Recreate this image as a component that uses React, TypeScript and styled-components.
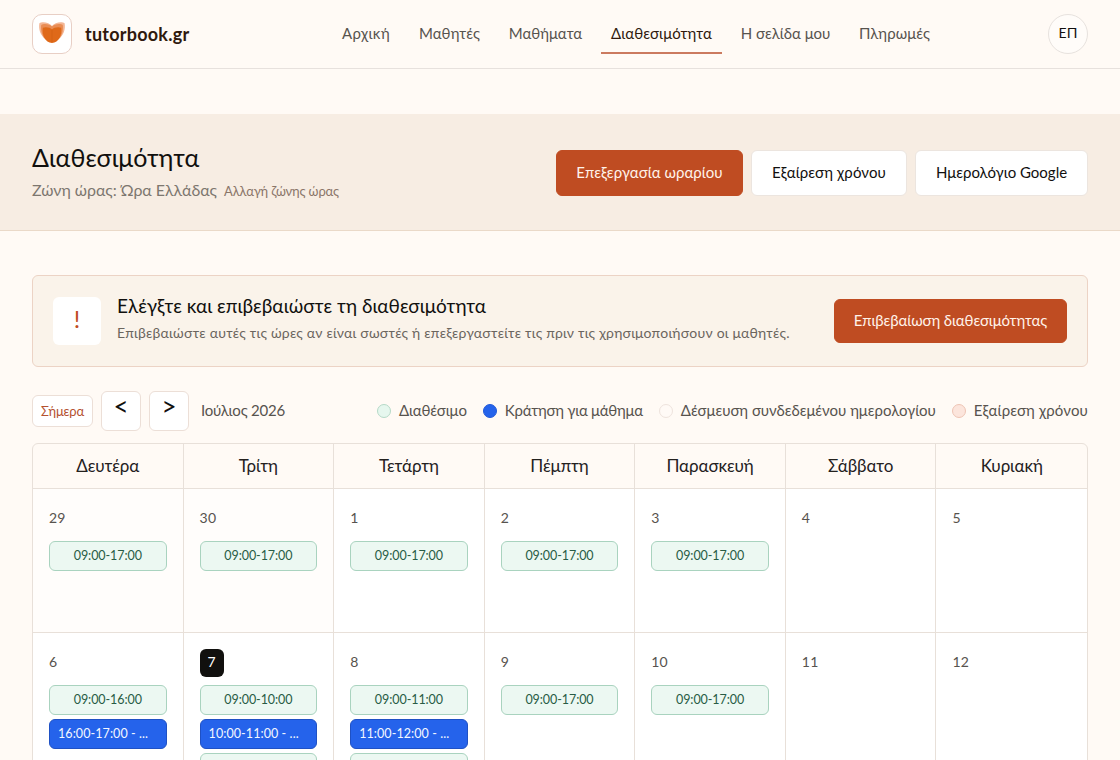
import React from "react";
import styled, { createGlobalStyle } from "styled-components";

const Global = createGlobalStyle`
  *, *::before { box-sizing: border-box; }
  body {
    margin: 0;
    height: 760px;
    overflow: hidden;
    background: #fffaf5;
    color: #11100e;
    font-family: Lato, "Open Sans", sans-serif;
  }
  button { font-family: inherit; cursor: pointer; }
`;

const Header = styled.header`
  display: flex;
  align-items: center;
  justify-content: space-between;
  height: 69px;
  padding: 0 32px;
  border-bottom: 1px solid #e7e1dd;
`;

const Brand = styled.a`
  display: flex;
  align-items: center;
  gap: 13px;
  width: 300px;
  color: #2f190d;
  font-size: 18px;
  font-weight: 700;
  letter-spacing: 0.24px;
`;

const LogoBox = styled.span`
  display: flex;
  width: 40px;
  height: 40px;
  border: 1px solid #e8cfc5;
  border-radius: 10px;
  background: #fff;
`;

const Nav = styled.nav`
  display: flex;
  flex: 1;
  gap: 9px;
`;

const NavItem = styled.a<{ $width: number; $active?: boolean; $spacing?: number }>`
  flex: none;
  width: ${(p) => p.$width}px;
  height: 40px;
  padding-top: 2px;
  border-bottom: 2px solid ${(p) => (p.$active ? "#cb7a5f" : "transparent")};
  color: ${(p) => (p.$active ? "#2f190d" : "#57534e")};
  font-size: 15px;
  line-height: 34px;
  letter-spacing: ${(p) => p.$spacing ?? 0}px;
  text-align: center;
  white-space: nowrap;
`;

const Avatar = styled.button`
  width: 40px;
  height: 40px;
  padding: 0 0 3px;
  border: 1px solid #e7e2de;
  border-radius: 50%;
  background: #fffcf9;
  color: #11100e;
  font-size: 14px;
`;

const Hero = styled.section`
  display: flex;
  align-items: center;
  justify-content: space-between;
  height: 117px;
  margin-top: 45px;
  padding: 0 32px;
  border-bottom: 1px solid #ead9c8;
  background: #f7ede3;
`;

const Title = styled.h1`
  margin: 0;
  font-size: 25px;
  font-weight: 400;
  line-height: 32px;
  letter-spacing: 0.1px;
`;

const Zone = styled.p`
  display: flex;
  align-items: baseline;
  gap: 7px;
  margin: 5px 0 0;
  color: #7d776f;
  font-size: 16px;
  line-height: 24px;
  letter-spacing: -0.05px;
`;

const ZoneLink = styled.a`
  color: #8a7569;
  font-size: 13px;
  letter-spacing: -0.15px;
`;

const Actions = styled.div`
  display: flex;
  gap: 8px;
  padding-top: 2px;
`;

const Button = styled.button<{ $width: number; $primary?: boolean; $height?: number; $spacing?: number }>`
  flex: none;
  width: ${(p) => p.$width}px;
  height: ${(p) => p.$height ?? 46}px;
  padding: 0 0 2px;
  border: 1px solid ${(p) => (p.$primary ? "#bf4c22" : "#ece5df")};
  border-radius: 6px;
  background: ${(p) => (p.$primary ? "#bf4c22" : "#fff")};
  color: ${(p) => (p.$primary ? "#fff3ea" : "#11100e")};
  font-size: 15px;
  letter-spacing: ${(p) => p.$spacing ?? 0}px;
  white-space: nowrap;
`;

const Main = styled.main`
  padding: 44px 32px 0;
`;

const Alert = styled.section`
  display: flex;
  align-items: center;
  height: 92px;
  padding: 0 20px;
  border: 1px solid #ecd3c5;
  border-radius: 6px;
  background: #faf3ea;
`;

const AlertIcon = styled.span`
  flex: none;
  width: 48px;
  height: 48px;
  margin-right: 16px;
  border-radius: 6px;
  background: #fff;
  color: #bf4c22;
  font-size: 24px;
  line-height: 44px;
  text-align: center;
`;

const AlertText = styled.div`
  flex: 1;
  padding-bottom: 6px;
  white-space: nowrap;
`;

const AlertTitle = styled.h2`
  margin: 0;
  font-size: 19px;
  font-weight: 400;
  line-height: 28px;
  letter-spacing: 0.02px;
`;

const AlertBody = styled.p`
  margin: 1px 0 0;
  color: #6b655e;
  font-size: 14px;
  line-height: 24px;
  letter-spacing: 0.22px;
`;

const Toolbar = styled.div`
  display: flex;
  align-items: center;
  gap: 8px;
  height: 40px;
  margin-top: 24px;
`;

const TodayButton = styled.button`
  width: 61px;
  height: 32px;
  padding: 0;
  border: 1px solid #ecdfd7;
  border-radius: 6px;
  background: #fff;
  color: #b4512f;
  font-size: 13px;
  letter-spacing: -0.15px;
`;

const StepButton = styled.button`
  width: 40px;
  height: 40px;
  padding: 0 0 10px;
  border: 1px solid #ecdfd7;
  border-radius: 6px;
  background: #fff;
  color: #11100e;
  font-size: 26px;
  line-height: 24px;
`;

const Month = styled.span`
  margin-left: 4px;
  padding-bottom: 2px;
  color: #57534e;
  font-size: 15px;
  letter-spacing: -0.2px;
`;

const Legend = styled.ul`
  display: flex;
  gap: 16px;
  margin: 0 0 0 auto;
  padding: 0;
  list-style: none;
`;

const LegendItem = styled.li<{ $fill: string; $line: string; $spacing: number }>`
  display: flex;
  align-items: center;
  gap: 8px;
  color: #57534e;
  font-size: 15px;
  line-height: 18px;
  letter-spacing: ${(p) => p.$spacing}px;
  white-space: nowrap;

  &::before {
    content: "";
    width: 14px;
    height: 14px;
    border: 1px solid ${(p) => p.$line};
    border-radius: 50%;
    background: ${(p) => p.$fill};
  }
`;

const LegendText = styled.span`
  padding-bottom: 2px;
`;

const Calendar = styled.section`
  margin-top: 12px;
  border: 1px solid #e8e0d9;
  border-radius: 6px 6px 0 0;
  overflow: hidden;
`;

const Week = styled.div`
  display: grid;
  grid-template-columns: repeat(7, 1fr);
`;

const DayName = styled.div`
  height: 45px;
  border-right: 1px solid #e8e0d9;
  border-bottom: 1px solid #e8e0d9;
  color: #24211e;
  font-size: 17px;
  line-height: 43px;
  letter-spacing: -0.1px;
  text-align: center;
  &:last-child { border-right: 0; }
`;

const Day = styled.div<{ $muted?: boolean }>`
  display: flex;
  flex-direction: column;
  gap: 4px;
  min-width: 0;
  height: 144px;
  padding: 16px 16px 0;
  border-right: 1px solid #e8e0d9;
  border-bottom: 1px solid #e8e0d9;
  background: ${(p) => (p.$muted ? "#fffdfb" : "#fff")};
  &:last-child { border-right: 0; }
`;

const DayNumber = styled.span<{ $today?: boolean }>`
  flex: none;
  align-self: flex-start;
  min-width: ${(p) => (p.$today ? 24 : 0)}px;
  height: 28px;
  margin-bottom: 4px;
  border-radius: 6px;
  background: ${(p) => (p.$today ? "#11100e" : "transparent")};
  color: ${(p) => (p.$today ? "#fff" : "#57534e")};
  font-size: 14px;
  line-height: 26px;
  letter-spacing: 0.2px;
  text-align: center;
`;

const Slot = styled.div<{ $booked?: boolean }>`
  flex: none;
  height: 30px;
  padding: 0 8px;
  border: 1px solid ${(p) => (p.$booked ? "#1f51c4" : "#a9d3bf")};
  border-radius: 6px;
  background: ${(p) => (p.$booked ? "#2563eb" : "#ecf8f2")};
  color: ${(p) => (p.$booked ? "#f3f7ff" : "#285c45")};
  font-size: 12.5px;
  line-height: 27px;
  letter-spacing: ${(p) => (p.$booked ? 0.08 : -0.07)}px;
  text-align: ${(p) => (p.$booked ? "left" : "center")};
  white-space: nowrap;
`;

const Logo = () => (
  <svg width="38" height="38" viewBox="0 0 38 38" aria-hidden="true">
    <path d="M19 11C16.5 7.3 9 6 6.4 8.2C5.4 13.5 7 20.5 13 24.5L19 26L25 24.5C31 20.5 32.6 13.5 31.6 8.2C29 6 21.5 7.3 19 11Z" fill="#f3b796" />
    <path d="M19 11.6C17 8.8 10.5 8.2 8.2 10C7.4 15.5 9 22 14 25.5L19 27L24 25.5C29 22 30.6 15.5 29.8 10C27.5 8.2 21 8.8 19 11.6Z" fill="#e98d55" />
    <path d="M19 14.4C17.2 12.4 12.5 11.6 9.8 12.8C8.8 19.5 12 27.9 19 27.9C26 27.9 29.2 19.5 28.2 12.8C25.5 11.6 20.8 12.4 19 14.4Z" fill="#df6919" />
    <path d="M19 14.5V27" stroke="#c95a12" strokeWidth="0.5" />
  </svg>
);

const legend = [
  { label: "Διαθέσιμο", fill: "#e6f7ee", line: "#b5d9c7", spacing: -0.1 },
  { label: "Κράτηση για μάθημα", fill: "#2563eb", line: "#2159d8", spacing: -0.25 },
  { label: "Δέσμευση συνδεδεμένου ημερολογίου", fill: "#fffaf6", line: "#eee3dd", spacing: -0.03 },
  { label: "Εξαίρεση χρόνου", fill: "#fce5dc", line: "#eec4b4", spacing: 0.13 },
];

const dayNames = ["Δευτέρα", "Τρίτη", "Τετάρτη", "Πέμπτη", "Παρασκευή", "Σάββατο", "Κυριακή"];

type Entry = { time: string; booked?: boolean };
type DayData = { n: number; muted?: boolean; today?: boolean; slots: Entry[] };

const full: Entry[] = [{ time: "09:00-17:00" }];

const weeks: DayData[][] = [
  [
    { n: 29, muted: true, slots: full },
    { n: 30, muted: true, slots: full },
    { n: 1, slots: full },
    { n: 2, slots: full },
    { n: 3, slots: full },
    { n: 4, slots: [] },
    { n: 5, slots: [] },
  ],
  [
    { n: 6, slots: [{ time: "09:00-16:00" }, { time: "16:00-17:00 - ...", booked: true }] },
    { n: 7, today: true, slots: [{ time: "09:00-10:00" }, { time: "10:00-11:00 - ...", booked: true }, { time: "" }] },
    { n: 8, slots: [{ time: "09:00-11:00" }, { time: "11:00-12:00 - ...", booked: true }, { time: "" }] },
    { n: 9, slots: full },
    { n: 10, slots: full },
    { n: 11, slots: [] },
    { n: 12, slots: [] },
  ],
];

export default function App() {
  return (
    <>
      <Global />
      <Header>
        <Brand>
          <LogoBox><Logo /></LogoBox>
          tutorbook.gr
        </Brand>
        <Nav>
          <NavItem $width={68} $spacing={0.4}>Αρχική</NavItem>
          <NavItem $width={81} $spacing={0.1}>Μαθητές</NavItem>
          <NavItem $width={93}>Μαθήματα</NavItem>
          <NavItem $width={121} $spacing={0.1} $active>Διαθεσιμότητα</NavItem>
          <NavItem $width={109}>Η σελίδα μου</NavItem>
          <NavItem $width={91} $spacing={0.1}>Πληρωμές</NavItem>
        </Nav>
        <Avatar>ΕΠ</Avatar>
      </Header>

      <Hero>
        <div>
          <Title>Διαθεσιμότητα</Title>
          <Zone>
            Ζώνη ώρας: Ώρα Ελλάδας
            <ZoneLink>Αλλαγή ζώνης ώρας</ZoneLink>
          </Zone>
        </div>
        <Actions>
          <Button $primary $width={187} $spacing={0.04}>Επεξεργασία ωραρίου</Button>
          <Button $width={156} $spacing={0.12}>Εξαίρεση χρόνου</Button>
          <Button $width={173}>Ημερολόγιο Google</Button>
        </Actions>
      </Hero>

      <Main>
        <Alert>
          <AlertIcon>!</AlertIcon>
          <AlertText>
            <AlertTitle>Ελέγξτε και επιβεβαιώστε τη διαθεσιμότητα</AlertTitle>
            <AlertBody>
              Επιβεβαιώστε αυτές τις ώρες αν είναι σωστές ή επεξεργαστείτε τις πριν τις χρησιμοποιήσουν οι μαθητές.
            </AlertBody>
          </AlertText>
          <Button $primary $width={233} $height={44} $spacing={-0.1}>Επιβεβαίωση διαθεσιμότητας</Button>
        </Alert>

        <Toolbar>
          <TodayButton>Σήμερα</TodayButton>
          <StepButton>&lt;</StepButton>
          <StepButton>&gt;</StepButton>
          <Month>Ιούλιος 2026</Month>
          <Legend>
            {legend.map((item) => (
              <LegendItem key={item.label} $fill={item.fill} $line={item.line} $spacing={item.spacing}>
                <LegendText>{item.label}</LegendText>
              </LegendItem>
            ))}
          </Legend>
        </Toolbar>

        <Calendar>
          <Week>
            {dayNames.map((name) => <DayName key={name}>{name}</DayName>)}
          </Week>
          {weeks.map((week, i) => (
            <Week key={i}>
              {week.map((day) => (
                <Day key={day.n} $muted={day.muted}>
                  <DayNumber $today={day.today}>{day.n}</DayNumber>
                  {day.slots.map((slot, j) => (
                    <Slot key={j} $booked={slot.booked}>{slot.time}</Slot>
                  ))}
                </Day>
              ))}
            </Week>
          ))}
        </Calendar>
      </Main>
    </>
  );
}
